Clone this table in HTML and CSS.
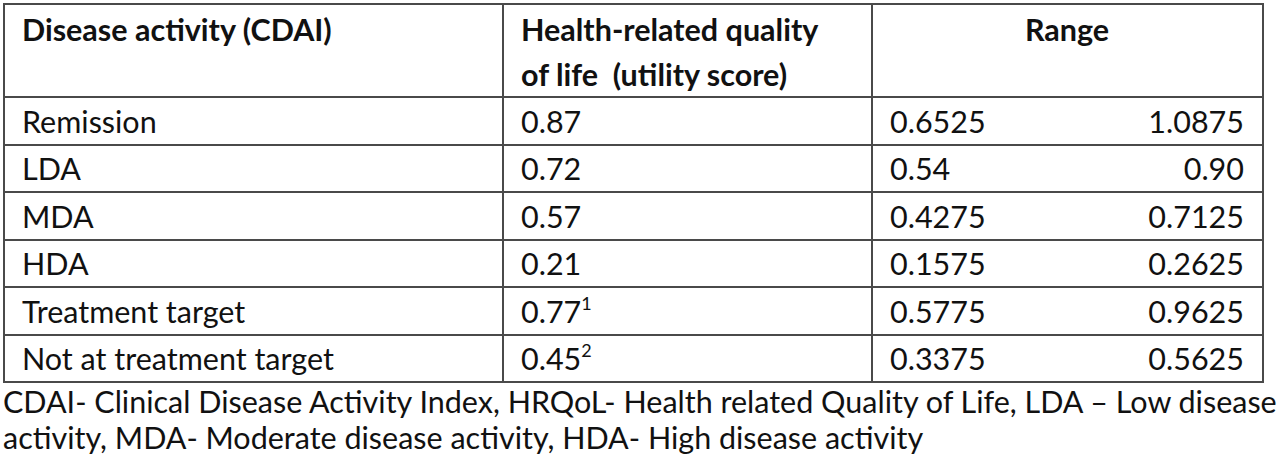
FILE: index.html
```html
<!DOCTYPE html>
<html>
<head>
<meta charset="utf-8">
<link rel="stylesheet" href="styles.css">
</head>
<body>
<div class="page">
  <table class="data">
    <colgroup>
      <col class="c1">
      <col class="c2">
      <col class="c3">
    </colgroup>
    <thead>
      <tr class="head">
        <th class="h-left">Disease activity (CDAI)</th>
        <th class="h-left">Health-related quality<br>of life&nbsp; (utility score)</th>
        <th class="h-center">Range</th>
      </tr>
    </thead>
    <tbody>
      <tr><td>Remission</td><td>0.87</td><td><div class="range"><span>0.6525</span><span>1.0875</span></div></td></tr>
      <tr><td>LDA</td><td>0.72</td><td><div class="range"><span>0.54</span><span>0.90</span></div></td></tr>
      <tr><td>MDA</td><td>0.57</td><td><div class="range"><span>0.4275</span><span>0.7125</span></div></td></tr>
      <tr><td>HDA</td><td>0.21</td><td><div class="range"><span>0.1575</span><span>0.2625</span></div></td></tr>
      <tr><td>Treatment target</td><td>0.77<sup class="sup">1</sup></td><td><div class="range"><span>0.5775</span><span>0.9625</span></div></td></tr>
      <tr><td>Not at treatment target</td><td>0.45<sup class="sup">2</sup></td><td><div class="range"><span>0.3375</span><span>0.5625</span></div></td></tr>
    </tbody>
  </table>
  <p class="note">CDAI- Clinical Disease Activity Index, HRQoL- Health related Quality of Life, LDA – Low disease activity, MDA- Moderate disease activity, HDA- High disease activity</p>
</div>
</body>
</html>
```
FILE: styles.css
```css
html, body {
  margin: 0;
  padding: 0;
  background: #ffffff;
}
body {
  font-family: Lato, "Open Sans", sans-serif;
  color: #111111;
  font-size: 30.5px;
}
.page {
  padding: 3px 0 0 3px;
  width: 1277px;
}
.data {
  border-collapse: collapse;
  width: 1259px;
  table-layout: fixed;
}
.c1 { width: 499px; }
.c2 { width: 369px; }
.c3 { width: 391px; }
.data th,
.data td {
  border: 2px solid #4a4a4a;
  padding: 0 18px 0 17px;
  vertical-align: middle;
}
.data th {
  font-weight: bold;
  vertical-align: top;
  line-height: 44.5px;
  padding-top: 2px;
  height: 86px;
}
.h-left { text-align: left; }
.h-center { text-align: center; }
.data td {
  height: 45.5px;
  line-height: 40px;
  font-weight: normal;
}
.range {
  display: flex;
  justify-content: space-between;
}
.sup {
  font-size: 18px;
  line-height: 0;
  vertical-align: 13px;
}
.note {
  margin: 0;
  line-height: 36px;
}
```
